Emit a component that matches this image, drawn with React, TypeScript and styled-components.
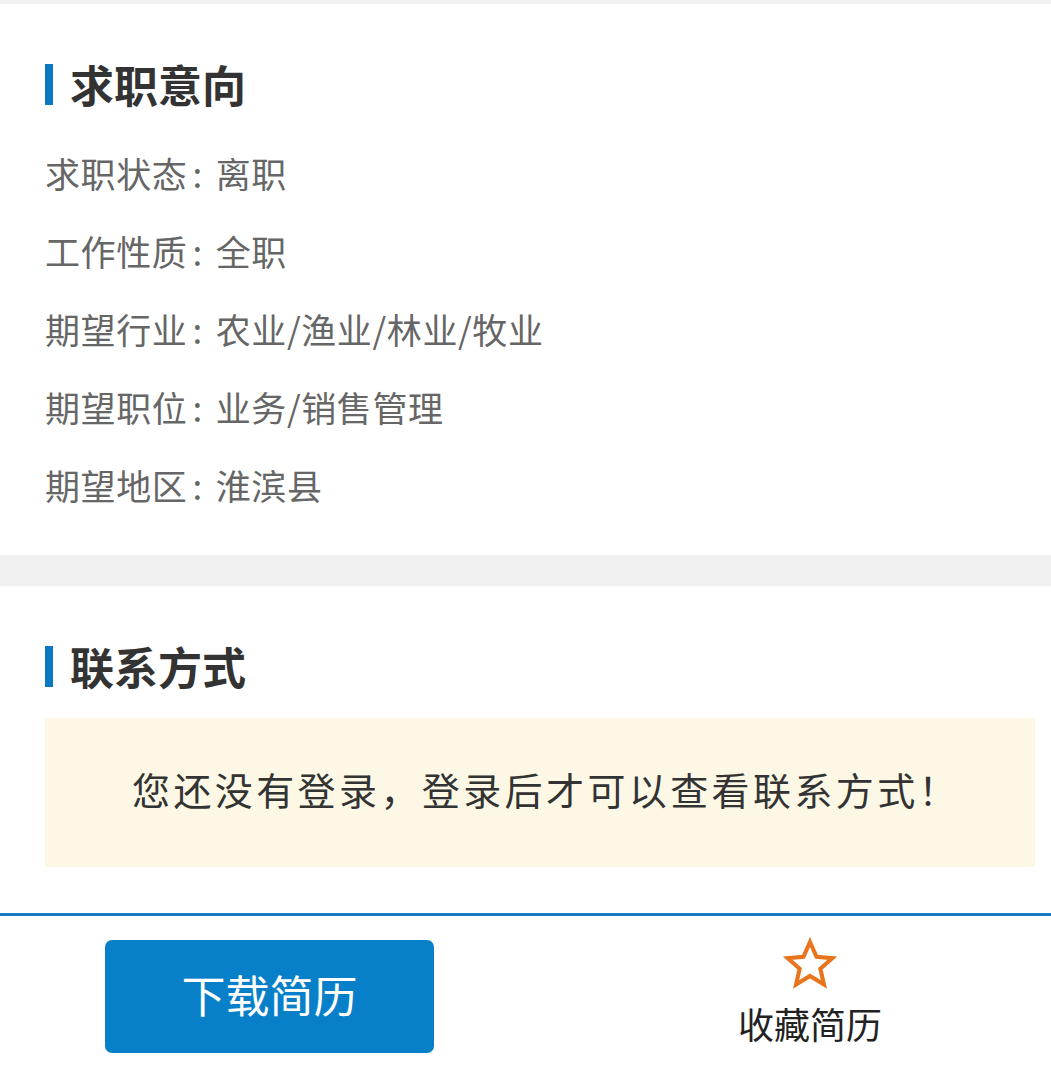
import * as React from "react";
import styled, { createGlobalStyle } from "styled-components";

const GlobalStyle = createGlobalStyle`
  html, body {
    margin: 0;
    padding: 0;
    background: #ffffff;
  }
  body {
    font-family: "Noto Sans CJK SC", "Noto Sans", sans-serif;
  }
`;

const Page = styled.div`
  width: 100%;
  background: #f0f0f0;
  padding-top: 4px;
`;

const Section = styled.section<{ $gap?: boolean }>`
  background: #ffffff;
  padding: 60px 16px ${({ $gap }) => ($gap ? "29px" : "46px")} 45px;
  margin-bottom: ${({ $gap }) => ($gap ? "31px" : "0")};
`;

const Title = styled.h2`
  margin: 0;
  height: 41px;
  display: flex;
  align-items: center;
  gap: 17px;
  font-size: 44px;
  line-height: 41px;
  font-weight: 700;
  color: #333333;

  &::before {
    content: "";
    flex: none;
    width: 8px;
    height: 41px;
    background: #0a78c2;
  }
`;

const List = styled.div`
  margin-top: 31px;
  display: flex;
  flex-direction: column;
`;

const Row = styled.div`
  height: 78px;
  display: flex;
  align-items: center;
  padding-bottom: 5px;
  box-sizing: border-box;
  font-size: 35px;
  letter-spacing: 0.6px;
  color: #666666;
  white-space: nowrap;
`;

const Colon = styled.span`
  margin: 0 13px 0 5px;
`;

const Notice = styled.div`
  margin-top: 31px;
  height: 149px;
  box-sizing: border-box;
  padding: 0 0 8px 12px;
  display: flex;
  align-items: center;
  justify-content: center;
  background: #fcf8e5;
  font-size: 38px;
  letter-spacing: 3.4px;
  color: #333333;
`;

const Footer = styled.footer`
  border-top: 3px solid #1a79bf;
  background: #ffffff;
  height: 161px;
  display: grid;
  grid-template-columns: 539px 1fr;
`;

const Cell = styled.div<{ $pad?: number }>`
  display: flex;
  flex-direction: column;
  align-items: center;
  padding-left: ${({ $pad }) => $pad ?? 0}px;
`;

const DownloadButton = styled.button`
  margin-top: 24px;
  width: 329px;
  height: 113px;
  padding: 0 0 6px;
  border: none;
  border-radius: 7px;
  background: #0880c9;
  color: #ffffff;
  font-family: inherit;
  font-size: 44px;
  cursor: pointer;
`;

const Favorite = styled.div`
  margin-top: 21px;
  display: flex;
  flex-direction: column;
  align-items: center;
  gap: 10px;
  font-size: 36px;
  color: #222222;
  line-height: 44px;
`;

const StarIcon = () => (
  <svg width="54" height="54" viewBox="0 0 24 24" fill="none">
    <path
      d="M12 2.2l2.9 6.6 7 .6-5.3 4.7 1.6 7-6.2-3.8-6.2 3.8 1.6-7-5.3-4.7 7-.6z"
      stroke="#e8741c"
      strokeWidth="1.8"
      strokeLinejoin="miter"
    />
  </svg>
);

const intention = [
  ["求职状态", "离职"],
  ["工作性质", "全职"],
  ["期望行业", "农业/渔业/林业/牧业"],
  ["期望职位", "业务/销售管理"],
  ["期望地区", "淮滨县"],
];

export default function App() {
  return (
    <>
      <GlobalStyle />
      <Page>
        <Section $gap>
          <Title>求职意向</Title>
          <List>
            {intention.map(([label, value]) => (
              <Row key={label}>
                {label}
                <Colon>:</Colon>
                {value}
              </Row>
            ))}
          </List>
        </Section>
        <Section>
          <Title>联系方式</Title>
          <Notice>您还没有登录，登录后才可以查看联系方式！</Notice>
        </Section>
        <Footer>
          <Cell>
            <DownloadButton>下载简历</DownloadButton>
          </Cell>
          <Cell $pad={30}>
            <Favorite>
              <StarIcon />
              收藏简历
            </Favorite>
          </Cell>
        </Footer>
      </Page>
    </>
  );
}
